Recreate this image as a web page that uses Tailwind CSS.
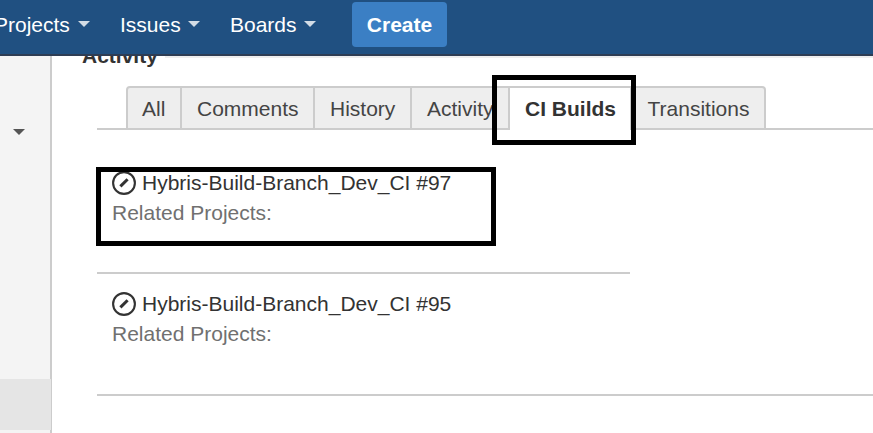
<!DOCTYPE html>
<html lang="en">
<head>
<meta charset="utf-8">
<title>Activity</title>
<script src="https://cdn.jsdelivr.net/npm/@tailwindcss/browser@4"></script>
</head>
<body class="relative h-[433px] w-[873px] overflow-hidden bg-white font-['Liberation_Sans',Arial,sans-serif] text-[21px] leading-[30px] text-[#333] whitespace-nowrap flex flex-col">
<header class="relative z-10 flex h-14 shrink-0 border-b-2 border-[#2e3d54] bg-[#205081] text-white">
  <nav class="flex w-[352px] shrink-0 pt-2.5">
    <a class="-ml-[6px] flex w-[126px] shrink-0"><span class="w-[84px]">Projects</span><svg class="mt-[11px] h-[6px] w-[12px]" viewBox="0 0 12 6"><path d="M0 0H12L6 6Z" fill="#d2dce6"/></svg></a>
    <a class="flex w-[110px] shrink-0"><span class="w-[68px]">Issues</span><svg class="mt-[11px] h-[6px] w-[12px]" viewBox="0 0 12 6"><path d="M0 0H12L6 6Z" fill="#d2dce6"/></svg></a>
    <a class="flex shrink-0"><span class="w-[74px]">Boards</span><svg class="mt-[11px] h-[6px] w-[12px]" viewBox="0 0 12 6"><path d="M0 0H12L6 6Z" fill="#d2dce6"/></svg></a>
  </nav>
  <button class="mt-0.5 h-[45px] w-[95px] rounded-[4px] bg-[#3b7fc4] text-center font-bold">Create</button>
</header>
<div class="flex h-[377px]">
  <aside class="w-[52px] shrink-0 border-r-2 border-[#ccc] bg-[#f4f4f4]">
    <svg class="mt-[73px] ml-[13px] h-[6px] w-[12px]" viewBox="0 0 12 6"><path d="M0 0H12L6 6Z" fill="#555"/></svg>
    <div class="mt-[244px] h-[51px] w-[51px] bg-[#e5e5e5]"></div>
  </aside>
  <main class="min-w-0 flex-1 pl-[45px]">
    <div class="-ml-[15px] flex h-[30px]">
      <h2 class="-mt-[15px] w-[83px] shrink-0 font-bold">Activity</h2>
      <div class="h-0.5 flex-1 bg-[#eee]"></div>
    </div>
    <div class="flex h-11 border-b-2 border-[#ccc] pl-[29px]">
      <div class="flex h-11 text-[#444]">
        <div class="w-14 rounded-tl-[4px] border-2 border-[#ccc] bg-[#eee] pt-[6px] pl-[14px]">All</div>
        <div class="w-[133px] border-y-2 border-r-2 border-[#ccc] bg-[#eee] pt-[6px] pl-[15px]">Comments</div>
        <div class="w-[97px] border-y-2 border-r-2 border-[#ccc] bg-[#eee] pt-[6px] pl-[15px]">History</div>
        <div class="w-[98px] rounded-br-[2px] border-y-2 border-r-2 border-[#ccc] bg-[#eee] pt-[6px] pl-[15px]">Activity</div>
        <div class="w-[122px] border-t-2 border-r-2 border-[#ccc] bg-white pt-[6px] pl-[15px] font-bold text-[#333]">CI Builds</div>
        <div class="w-[134px] rounded-tr-[4px] border-y-2 border-r-2 border-[#ccc] bg-[#eee] pt-[6px] pl-[15.5px]">Transitions</div>
      </div>
    </div>
    <article class="h-36 w-[533px] border-b-2 border-[#ccc] pt-[38px] pl-[15px]">
      <div class="flex"><svg class="mt-[3px] mr-[6px] h-6 w-6" viewBox="0 0 24 24" fill="none" stroke="#333"><circle cx="12" cy="12" r="10.9" stroke-width="2.1"/><path d="M8.4 15.4L15.6 8.2" stroke-width="3"/></svg>Hybris-Build-Branch_Dev_CI #97</div>
      <div class="text-[#707070]">Related Projects:</div>
    </article>
    <article class="h-[122px] border-b-2 border-[#ccc] pt-[15px] pl-[15px]">
      <div class="flex"><svg class="mt-[3px] mr-[6px] h-6 w-6" viewBox="0 0 24 24" fill="none" stroke="#333"><circle cx="12" cy="12" r="10.9" stroke-width="2.1"/><path d="M8.4 15.4L15.6 8.2" stroke-width="3"/></svg>Hybris-Build-Branch_Dev_CI #95</div>
      <div class="text-[#707070]">Related Projects:</div>
    </article>
  </main>
</div>
<div class="absolute top-[75px] left-[492px] h-[70px] w-36 border-5 border-black"></div>
<div class="absolute top-[167px] left-[96px] h-[79px] w-[400px] border-5 border-black"></div>
</body>
</html>
